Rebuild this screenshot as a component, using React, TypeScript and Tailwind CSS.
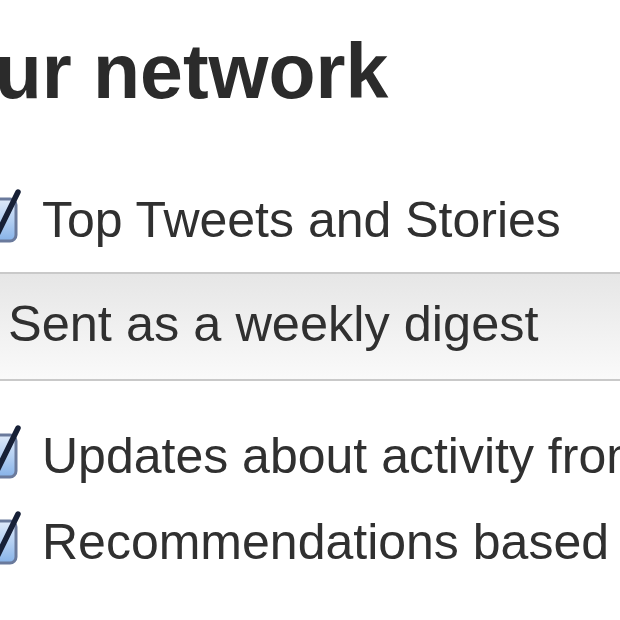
import React from "react";

const font = { fontFamily: '"Liberation Sans", Arial, Helvetica, sans-serif' };

function CheckedBox() {
  return (
    <svg width="48" height="60" viewBox="0 0 48 60" className="shrink-0 overflow-visible">
      <defs>
        <linearGradient id="boxFill" x1="0" y1="0" x2="0" y2="1">
          <stop offset="0" stopColor="#dfeafa" />
          <stop offset="0.5" stopColor="#b5d0f2" />
          <stop offset="1" stopColor="#86b2e8" />
        </linearGradient>
      </defs>
      <rect x="3" y="13" width="38" height="42" rx="6" fill="url(#boxFill)" stroke="#6a7a9c" strokeWidth="3" />
      <path d="M14 40 L22 49 L43 6" fill="none" stroke="#172036" strokeWidth="5.5" strokeLinecap="round" strokeLinejoin="round" />
    </svg>
  );
}

function Row({ label }: { label: string }) {
  return (
    <div className="flex h-[50px] items-center">
      <div className="ml-[-25px] mt-[-8px] flex w-[67px] shrink-0 items-center">
        <CheckedBox />
      </div>
      <span className="whitespace-nowrap text-[50px] leading-[50px] text-[#303030]">{label}</span>
    </div>
  );
}

export default function App() {
  return (
    <div className="h-[620px] w-[620px] overflow-hidden bg-white" style={font}>
      <h2 className="ml-[-98px] mt-[33px] whitespace-nowrap text-[77px] font-bold leading-[77px] text-[#2b2b2b]">
        Your network
      </h2>

      <div className="mt-[85px]">
        <Row label="Top Tweets and Stories" />
      </div>

      <div className="mt-[27px] ml-[-20px] w-[700px] border-y-[2px] border-[#c9c9c9] bg-gradient-to-b from-[#e6e6e6] to-[#fafafa] pb-[30px] pl-[28px] pt-[25px]">
        <p className="whitespace-nowrap text-[50.5px] leading-[50px] text-[#303030]">Sent as a weekly digest</p>
      </div>

      <div className="mt-[50px] flex flex-col gap-[36px]">
        <Row label="Updates about activity from people you follow" />
        <Row label="Recommendations based on your activity" />
      </div>
    </div>
  );
}
